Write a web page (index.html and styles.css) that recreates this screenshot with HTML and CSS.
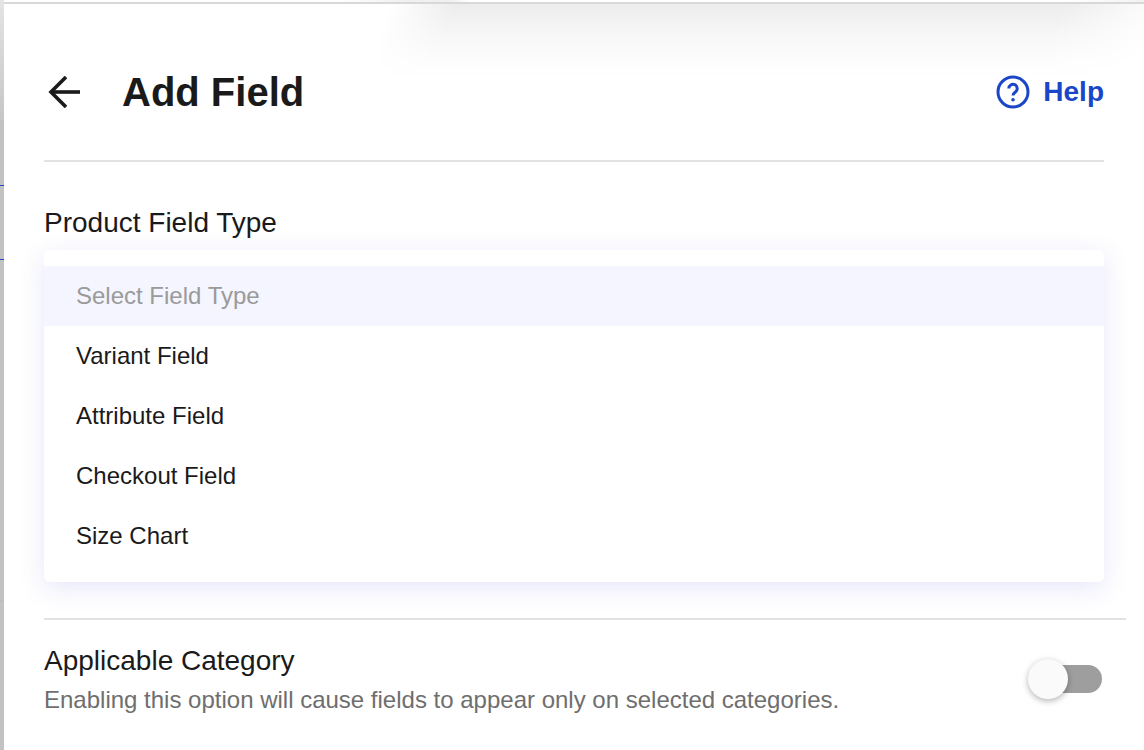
FILE: index.html
```html
<!DOCTYPE html>
<html lang="en">
<head>
    <meta charset="UTF-8">
    <title>Add Field</title>
    <link rel="stylesheet" href="styles.css">
</head>
<body>
    <div class="under-shadow"></div>
    <div class="top-edge"></div>
    <div class="left-edge">
        <span class="left-line line-one"></span>
        <span class="left-line line-two"></span>
    </div>

    <main class="panel">
        <header class="panel-header">
            <div class="title-group">
                <svg class="back-icon" width="34" height="32" viewBox="0 0 34 32" fill="none" stroke="#1a1a1a" stroke-width="3.6">
                    <path d="M32 16H3"/>
                    <path d="M18 1L3 16l15 15"/>
                </svg>
                <h1>Add Field</h1>
            </div>
            <a class="help-link" href="#">
                <svg width="34" height="34" viewBox="0 0 34 34" fill="none" stroke="#1c46c8" stroke-width="3">
                    <circle cx="17" cy="17" r="15"/>
                    <path d="M12.800 13.500a4.200 4.200 0 1 1 6.800 3.300c-1.600 1.200-2.600 2-2.600 3.700"/>
                    <circle cx="17" cy="24.800" r="1.800" fill="#1c46c8" stroke="none"/>
                </svg>
                <span>Help</span>
            </a>
        </header>

        <section class="field-type">
            <label class="field-label">Product Field Type</label>
            <ul class="dropdown">
                <li class="option placeholder">Select Field Type</li>
                <li class="option">Variant Field</li>
                <li class="option">Attribute Field</li>
                <li class="option">Checkout Field</li>
                <li class="option">Size Chart</li>
            </ul>
        </section>

        <section class="category-row">
            <div>
                <div class="field-label">Applicable Category</div>
                <p class="hint">Enabling this option will cause fields to appear only on selected categories.</p>
            </div>
            <div class="toggle"><span class="knob"></span></div>
        </section>
    </main>
</body>
</html>
```

FILE: styles.css
```css
* { box-sizing: border-box; }
html, body { height: 100%; }
body { margin: 0; overflow: hidden; background-color: #fff; color: #1a1a1a; font-family: "Liberation Sans", Arial, sans-serif; position: relative; }

/* bits of the page behind the panel */
.under-shadow {
    position: absolute; top: 4px; left: 380px; width: 770px; height: 76px;
    background: linear-gradient(rgba(0, 0, 0, 0.075), rgba(0, 0, 0, 0.035) 38%, rgba(0, 0, 0, 0.008) 75%, transparent);
    mask-image: linear-gradient(115deg, transparent 10px, #000 70px, #000 calc(100% - 110px), transparent calc(100% - 10px));
}
.top-edge { position: absolute; top: 0; left: 0; right: 0; height: 4px; background: linear-gradient(90deg, #fff 340px, #f0f0f0 400px, #f0f0f0 450px, #fff 470px, #fff 1070px, #f2f2f2 1144px); border-bottom: 2px solid #d8d8d8; }
.left-edge { position: absolute; top: 0; left: 0; bottom: 0; width: 4px; background: linear-gradient(#e4e4e4, #c6c6c6 120px, #c2c2c2 120px, #c2c2c2 600px, #b8b8b8 601px, #c2c2c2 602px); }
.left-line { position: absolute; left: 0; width: 4px; height: 1px; background-color: #2546c8; }
.line-one { top: 185px; }
.line-two { top: 259px; }

.panel { position: relative; height: 100%; padding: 0 40px 0 44px; }

.panel-header { display: flex; align-items: center; justify-content: space-between; height: 162px; border-bottom: 2px solid #e2e2e2; padding-top: 24px; }
.title-group { display: flex; align-items: center; gap: 40px; }
.back-icon { margin-left: 4px; }
h1 { margin: 0; font-size: 40px; line-height: 46px; font-weight: 700; }
.help-link { display: flex; align-items: center; gap: 14px; color: #1c46c8; font-size: 28px; font-weight: 700; text-decoration: none; }
.help-link svg { margin-right: -1px; }

.field-type { padding-top: 44px; }
.field-label { font-size: 28px; line-height: 34px; }
.dropdown { list-style: none; margin: 10px 0 0; padding: 16px 0; background-color: #fff; border-radius: 6px; box-shadow: 0 6px 26px rgba(90, 90, 220, 0.15); }
.option { height: 60px; line-height: 60px; padding-left: 32px; font-size: 24px; }
.placeholder { background-color: #f4f5fe; color: #9a9a9a; }

.category-row { display: flex; align-items: flex-start; justify-content: space-between; margin-top: 36px; margin-right: -22px; padding: 24px 24px 0 0; border-top: 2px solid #e2e2e2; }
.hint { margin: 7px 0 0; font-size: 24px; line-height: 30px; color: #6e6e6e; }
.toggle { position: relative; width: 72px; height: 28px; margin-top: 21px; background-color: #9e9e9e; border-radius: 14px; }
.knob { position: absolute; left: -2px; top: -6px; width: 40px; height: 40px; background-color: #fafafa; border-radius: 50%; box-shadow: 0 2px 6px rgba(0, 0, 0, 0.3); }
```
